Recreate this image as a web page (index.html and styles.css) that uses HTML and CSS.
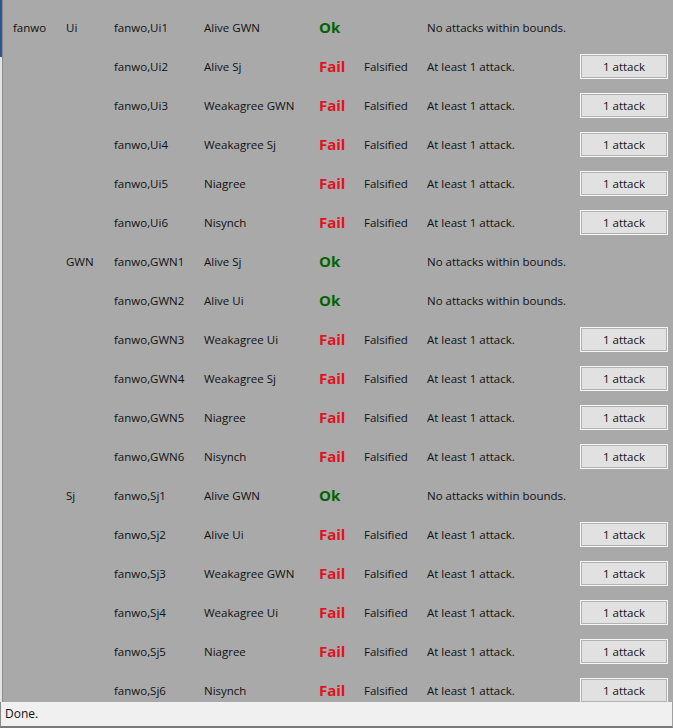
FILE: index.html
```html
<!DOCTYPE html>
<html lang="en">
<head>
  <meta charset="UTF-8">
  <title>Verification results</title>
  <link rel="stylesheet" href="styles.css">
</head>
<body>
  <div class="window">
    <div class="frame">
      <div class="edge"></div>
      <div class="results">
        <div class="row"><span>fanwo</span><span>Ui</span><span>fanwo,Ui1</span><span>Alive GWN</span><span class="ok">Ok</span><span></span><span>No attacks within bounds.</span><span></span></div>
        <div class="row"><span></span><span></span><span>fanwo,Ui2</span><span>Alive Sj</span><span class="fail">Fail</span><span>Falsified</span><span>At least 1 attack.</span><button class="attack">1 attack</button></div>
        <div class="row"><span></span><span></span><span>fanwo,Ui3</span><span>Weakagree GWN</span><span class="fail">Fail</span><span>Falsified</span><span>At least 1 attack.</span><button class="attack">1 attack</button></div>
        <div class="row"><span></span><span></span><span>fanwo,Ui4</span><span>Weakagree Sj</span><span class="fail">Fail</span><span>Falsified</span><span>At least 1 attack.</span><button class="attack">1 attack</button></div>
        <div class="row"><span></span><span></span><span>fanwo,Ui5</span><span>Niagree</span><span class="fail">Fail</span><span>Falsified</span><span>At least 1 attack.</span><button class="attack">1 attack</button></div>
        <div class="row"><span></span><span></span><span>fanwo,Ui6</span><span>Nisynch</span><span class="fail">Fail</span><span>Falsified</span><span>At least 1 attack.</span><button class="attack">1 attack</button></div>

        <div class="row"><span></span><span>GWN</span><span>fanwo,GWN1</span><span>Alive Sj</span><span class="ok">Ok</span><span></span><span>No attacks within bounds.</span><span></span></div>
        <div class="row"><span></span><span></span><span>fanwo,GWN2</span><span>Alive Ui</span><span class="ok">Ok</span><span></span><span>No attacks within bounds.</span><span></span></div>
        <div class="row"><span></span><span></span><span>fanwo,GWN3</span><span>Weakagree Ui</span><span class="fail">Fail</span><span>Falsified</span><span>At least 1 attack.</span><button class="attack">1 attack</button></div>
        <div class="row"><span></span><span></span><span>fanwo,GWN4</span><span>Weakagree Sj</span><span class="fail">Fail</span><span>Falsified</span><span>At least 1 attack.</span><button class="attack">1 attack</button></div>
        <div class="row"><span></span><span></span><span>fanwo,GWN5</span><span>Niagree</span><span class="fail">Fail</span><span>Falsified</span><span>At least 1 attack.</span><button class="attack">1 attack</button></div>
        <div class="row"><span></span><span></span><span>fanwo,GWN6</span><span>Nisynch</span><span class="fail">Fail</span><span>Falsified</span><span>At least 1 attack.</span><button class="attack">1 attack</button></div>

        <div class="row"><span></span><span>Sj</span><span>fanwo,Sj1</span><span>Alive GWN</span><span class="ok">Ok</span><span></span><span>No attacks within bounds.</span><span></span></div>
        <div class="row"><span></span><span></span><span>fanwo,Sj2</span><span>Alive Ui</span><span class="fail">Fail</span><span>Falsified</span><span>At least 1 attack.</span><button class="attack">1 attack</button></div>
        <div class="row"><span></span><span></span><span>fanwo,Sj3</span><span>Weakagree GWN</span><span class="fail">Fail</span><span>Falsified</span><span>At least 1 attack.</span><button class="attack">1 attack</button></div>
        <div class="row"><span></span><span></span><span>fanwo,Sj4</span><span>Weakagree Ui</span><span class="fail">Fail</span><span>Falsified</span><span>At least 1 attack.</span><button class="attack">1 attack</button></div>
        <div class="row"><span></span><span></span><span>fanwo,Sj5</span><span>Niagree</span><span class="fail">Fail</span><span>Falsified</span><span>At least 1 attack.</span><button class="attack">1 attack</button></div>
        <div class="row"><span></span><span></span><span>fanwo,Sj6</span><span>Nisynch</span><span class="fail">Fail</span><span>Falsified</span><span>At least 1 attack.</span><button class="attack">1 attack</button></div>
      </div>
    </div>
    <div class="status">Done.</div>
  </div>
</body>
</html>
```

FILE: styles.css
```css
html, body {
  margin: 0;
  padding: 0;
  height: 100%;
}
body {
  font-family: 'Open Sans', 'Liberation Sans', sans-serif;
  font-size: 11.5px;
  color: #111;
  background-color: #f0f0f0;
}
.window {
  display: flex;
  flex-direction: column;
  height: 728px;
  width: 673px;
}
.frame {
  display: flex;
  height: 702px;
  overflow: hidden;
  background-color: #a9a9a9;
}
.edge {
  flex: 0 0 2px;
  background: linear-gradient(#2b5797 57px, #e4e4e4 57px);
  border-right: 1px solid #8a8a8a;
}
.results {
  flex: 1;
  padding: 8px 0 0 10px;
}
.row {
  display: grid;
  grid-template-columns: 53px 48px 90px 115px 45px 63px 153px 88px;
  align-items: center;
  height: 39px;
  white-space: nowrap;
}
/* bigger bold text: lift it so its baseline sits with the rest of the row */
.ok,
.fail {
  font-weight: bold;
  font-size: 15px;
  margin-bottom: 2px;
}
.ok {
  color: #006400;
}
.fail {
  color: #e3121e;
}
.attack {
  font-family: inherit;
  font-size: inherit;
  color: #111;
  height: 25px;
  padding: 0;
  background-color: #e1e1e1;
  border: 1px solid #f6f6f6;
  box-shadow: inset 0 0 0 1px #b2b2b2;
}
.status {
  height: 24px;
  line-height: 23px;
  padding-left: 4px;
  background-color: #f0f0f0;
  border-left: 1px solid #8a8a8a;
  border-right: 1px solid #a0a0a0;
  border-bottom: 2px solid #7a7a7a;
  font-size: 12px;
}
```
